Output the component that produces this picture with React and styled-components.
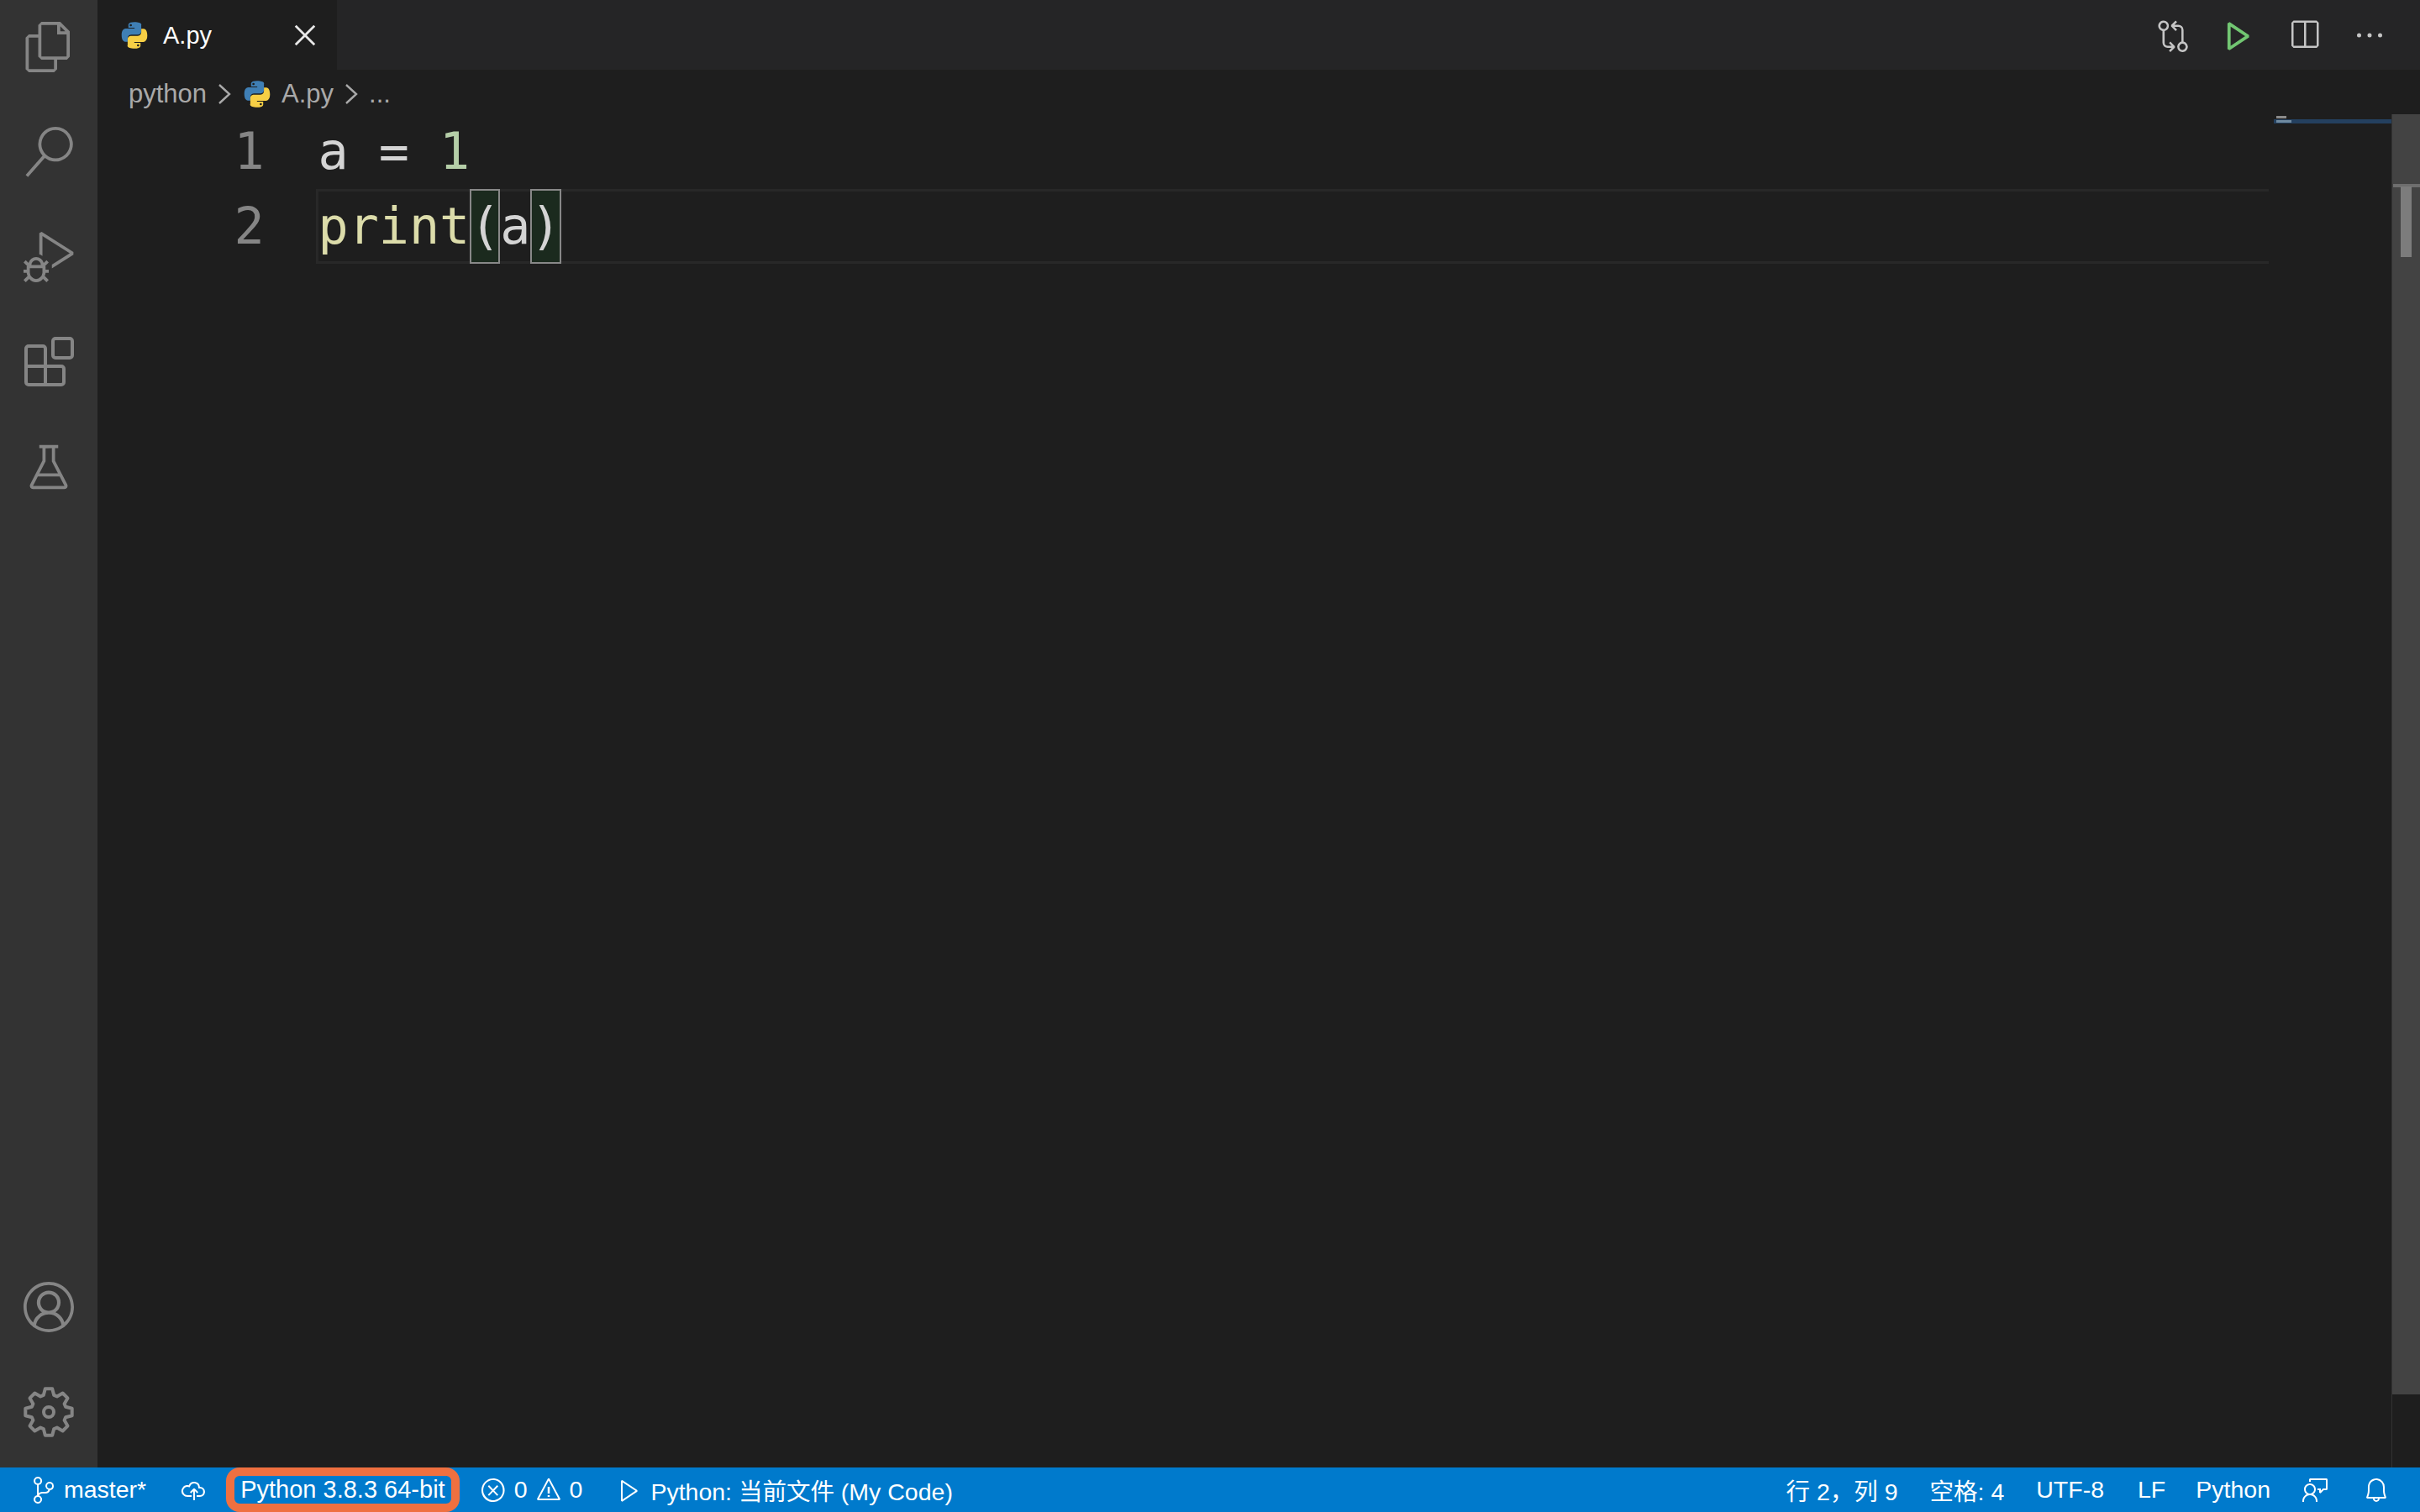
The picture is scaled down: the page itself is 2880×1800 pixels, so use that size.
import React from "react";
import styled, { createGlobalStyle } from "styled-components";
import {
	VscFiles,
	VscSearch,
	VscDebugAlt,
	VscBeaker,
	VscAccount,
	VscGitCompare,
	VscPlay,
	VscSplitHorizontal,
	VscEllipsis,
	VscChromeClose,
	VscSourceControl,
	VscCloudUpload,
	VscError,
	VscWarning,
	VscFeedback,
	VscBell,
} from "react-icons/vsc";

const GlobalStyle = createGlobalStyle`
	html, body {
		margin: 0;
		padding: 0;
		background: #1e1e1e;
		overflow: hidden;
	}
`;

const UI_FONT = `"Liberation Sans", "Noto Sans CJK SC", sans-serif`;

const Window = styled.div`
	width: 2880px;
	height: 1800px;
	display: flex;
	flex-direction: column;
	font-family: ${UI_FONT};
`;

const Main = styled.div`
	flex: 1;
	display: flex;
	min-height: 0;
`;

const ActivityBar = styled.nav`
	width: 116px;
	background: #333333;
	display: flex;
	flex-direction: column;
	justify-content: space-between;
	padding: 26px 0 36px;
	box-sizing: border-box;
`;

const ActivityGroup = styled.div`
	display: flex;
	flex-direction: column;
	align-items: center;
	gap: 65px;
	color: #858585;
	font-size: 60px;
	svg {
		display: block;
	}
`;

const OutlineIcon = styled.svg`
	width: 60px;
	height: 60px;
	fill: none;
	stroke: currentColor;
	stroke-width: 4;
	stroke-linejoin: round;
`;

const EditorColumn = styled.div`
	flex: 1;
	display: flex;
	flex-direction: column;
	min-width: 0;
	background: #1e1e1e;
`;

const TabBar = styled.div`
	height: 83px;
	background: #252526;
	display: flex;
	justify-content: space-between;
	align-items: stretch;
`;

const Tab = styled.div`
	width: 285px;
	box-sizing: border-box;
	background: #1e1e1e;
	display: flex;
	align-items: center;
	padding: 0 20px 0 26px;
	color: #ffffff;
	font-size: 29px;
`;

const TabName = styled.span`
	flex: 1;
	margin-left: 16px;
	padding-top: 2px;
`;

const TabClose = styled.span`
	display: flex;
	font-size: 36px;
	color: #e8e8e8;
`;

const Actions = styled.div`
	display: flex;
	align-items: center;
	gap: 38px;
	padding-right: 40px;
	color: #c5c5c5;
	font-size: 40px;
	svg {
		display: block;
	}
`;

const RunIcon = styled(VscPlay)`
	color: #73c773;
	stroke: currentColor;
	stroke-width: 0.5;
`;

const Breadcrumbs = styled.div`
	height: 53px;
	box-sizing: border-box;
	padding: 4px 0 0 37px;
	display: flex;
	align-items: center;
	color: #a9a9a9;
	font-size: 31px;
	gap: 11px;
`;

const Chevron = styled.svg`
	width: 20px;
	height: 30px;
	fill: none;
	stroke: #a9a9a9;
	stroke-width: 2.4;
`;

const EditorPane = styled.div`
	flex: 1;
	display: flex;
	min-height: 0;
	font-family: "DejaVu Sans Mono", monospace;
	font-size: 60px;
`;

const Gutter = styled.div`
	width: 260px;
	box-sizing: border-box;
	padding-right: 61px;
	color: #858585;
	text-align: right;
`;

const GutterLine = styled.div`
	height: 89px;
	line-height: 89px;
`;

const Code = styled.div`
	width: 2330px;
`;

const CodeLine = styled.div`
	height: 89px;
	line-height: 89px;
	box-sizing: border-box;
	white-space: pre;
	border: 3px solid ${(p) => (p.$current ? "#282828" : "transparent")};
	border-right: 0;
	display: flex;
	align-items: center;
`;

const Token = styled.span`
	color: ${(p) => p.$color || "#d4d4d4"};
`;

const Bracket = styled.span`
	color: #d4d4d4;
	background: #1b2a1e;
	outline: 2px solid #888888;
	outline-offset: -2px;
	height: 89px;
	margin-top: -3px;
	margin-bottom: -3px;
`;

const Minimap = styled.div`
	width: 140px;
	margin-left: 6px;
	display: flex;
	flex-direction: column;
	padding-top: 1px;
	box-sizing: border-box;
`;

const MiniRow = styled.div`
	height: 5px;
	display: flex;
	align-items: center;
	padding-left: 3px;
	background: ${(p) => (p.$current ? "#24405f" : "transparent")};
`;

const MiniText = styled.div`
	height: 3px;
	width: ${(p) => p.$w}px;
	background: ${(p) => p.$c};
`;

const ScrollColumn = styled.div`
	width: 34px;
	box-sizing: border-box;
	border-left: 1px solid #333333;
	padding-bottom: 87px;
	display: flex;
`;

const ScrollTrack = styled.div`
	flex: 1;
	background: #434343;
	position: relative;
`;

const ScrollMark = styled.div`
	position: absolute;
	left: 1px;
	right: 0;
	top: 83px;
	height: 4px;
	background: #6e6e6e;
`;

const ScrollThumb = styled.div`
	position: absolute;
	left: 10px;
	width: 13px;
	top: 86px;
	height: 84px;
	background: #7c7c7c;
`;

const StatusBar = styled.footer`
	height: 53px;
	background: #007acc;
	display: flex;
	justify-content: space-between;
	align-items: stretch;
	color: #ffffff;
	font-size: 28.5px;
`;

const StatusSide = styled.div`
	display: flex;
	align-items: center;
	padding-right: ${(p) => p.$end ?? 0}px;
`;

const StatusItem = styled.div`
	display: flex;
	align-items: center;
	gap: ${(p) => p.$gap ?? 8}px;
	margin-left: ${(p) => p.$ml ?? 0}px;
	white-space: nowrap;
	svg {
		display: block;
	}
`;

const Annotated = styled.div`
	align-self: stretch;
	margin-left: 23px;
	box-sizing: border-box;
	display: flex;
	align-items: center;
	padding: 0 7px;
	font-size: 29px;
	border: 10px solid #ef7040;
	border-radius: 16px;
	white-space: nowrap;
`;

const PythonMark = ({ size }) => {
	const d =
		"M11.9 1.5C6.9 1.5 7.2 3.7 7.2 3.7v2.3h4.9v.7H5.3S1.8 6.3 1.8 11.8s3 5.3 3 5.3h1.8v-2.6s-.1-3 3-3h5s2.8 0 2.8-2.8V4.3S18.900 1.500 11.900 1.500zM9.100 3.100a.9.9 0 1 1 0 1.800.9.9 0 0 1 0-1.800z";
	return (
		<svg width={size} height={size} viewBox="0 0 24 24" fillRule="evenodd">
			<path d={d} fill="#3f7fb5" />
			<path d={d} fill="#f7cf45" transform="rotate(180 12 12)" />
		</svg>
	);
};

// old style extensions icon, the current codicon has no inner grid lines
const ExtensionsIcon = () => (
	<OutlineIcon viewBox="0 0 60 60">
		<path d="M3 14a3 3 0 0 1 3-3h17a3 3 0 0 1 3 3v43H6a3 3 0 0 1-3-3zM3 35h42a3 3 0 0 1 3 3v16a3 3 0 0 1-3 3H26" />
		<rect x="35" y="2" width="23" height="23" rx="3" />
	</OutlineIcon>
);

// eight square teeth round a small ring
const gearPoints = () => {
	const pts = [];
	for (let i = 0; i < 8; i++) {
		const a = (i * Math.PI) / 4 - Math.PI / 2;
		[
			[-0.3, 21],
			[-0.15, 28],
			[0.15, 28],
			[0.3, 21],
		].forEach(([da, r]) => {
			pts.push(`${(30 + r * Math.cos(a + da)).toFixed(1)},${(30 + r * Math.sin(a + da)).toFixed(1)}`);
		});
	}
	return pts.join(" ");
};

const GearIcon = () => (
	<OutlineIcon viewBox="0 0 60 60">
		<polygon points={gearPoints()} />
		<circle cx="30" cy="30" r="6" />
	</OutlineIcon>
);

const App = () => {
	return (
		<Window>
			<GlobalStyle />
			<Main>
				<ActivityBar>
					<ActivityGroup>
						<VscFiles />
						<VscSearch />
						<VscDebugAlt />
						<ExtensionsIcon />
						<VscBeaker />
					</ActivityGroup>
					<ActivityGroup>
						<VscAccount />
						<GearIcon />
					</ActivityGroup>
				</ActivityBar>
				<EditorColumn>
					<TabBar>
						<Tab>
							<PythonMark size={36} />
							<TabName>A.py</TabName>
							<TabClose>
								<VscChromeClose />
							</TabClose>
						</Tab>
						<Actions>
							<VscGitCompare />
							<RunIcon />
							<VscSplitHorizontal />
							<VscEllipsis />
						</Actions>
					</TabBar>
					<Breadcrumbs>
						<span>python</span>
						<Chevron viewBox="0 0 20 30">
							<path d="M4 4l12 11L4 26" />
						</Chevron>
						<PythonMark size={36} />
						<span>A.py</span>
						<Chevron viewBox="0 0 20 30">
							<path d="M4 4l12 11L4 26" />
						</Chevron>
						<span>...</span>
					</Breadcrumbs>
					<EditorPane>
						<Gutter>
							<GutterLine>1</GutterLine>
							<GutterLine>2</GutterLine>
						</Gutter>
						<Code>
							<CodeLine>
								<Token>a = </Token>
								<Token $color="#b5cea8">1</Token>
							</CodeLine>
							<CodeLine $current>
								<Token $color="#dcdcaa">print</Token>
								<Bracket>(</Bracket>
								<Token>a</Token>
								<Bracket>)</Bracket>
							</CodeLine>
						</Code>
						<Minimap>
							<MiniRow>
								<MiniText $w={12} $c="#8a8a8a" />
							</MiniRow>
							<MiniRow $current>
								<MiniText $w={18} $c="#6f8aa0" />
							</MiniRow>
						</Minimap>
						<ScrollColumn>
							<ScrollTrack>
								<ScrollMark />
								<ScrollThumb />
							</ScrollTrack>
						</ScrollColumn>
					</EditorPane>
				</EditorColumn>
			</Main>
			<StatusBar>
				<StatusSide>
					<StatusItem $ml={36} $gap={8}>
						<VscSourceControl size={32} />
						master*
					</StatusItem>
					<StatusItem $ml={40}>
						<VscCloudUpload size={32} />
					</StatusItem>
					<Annotated>Python 3.8.3 64-bit</Annotated>
					<StatusItem $ml={24} $gap={9}>
						<VscError size={32} />
						0
						<VscWarning size={32} />
						0
					</StatusItem>
					<StatusItem $ml={40} $gap={9}>
						<VscPlay size={32} />
						Python: 当前文件 (My Code)
					</StatusItem>
				</StatusSide>
				<StatusSide $end={36}>
					<StatusItem>行 2，列 9</StatusItem>
					<StatusItem $ml={38}>空格: 4</StatusItem>
					<StatusItem $ml={38}>UTF-8</StatusItem>
					<StatusItem $ml={40}>LF</StatusItem>
					<StatusItem $ml={36}>Python</StatusItem>
					<StatusItem $ml={38}>
						<VscFeedback size={32} />
					</StatusItem>
					<StatusItem $ml={40}>
						<VscBell size={32} />
					</StatusItem>
				</StatusSide>
			</StatusBar>
		</Window>
	);
};

export default App;
